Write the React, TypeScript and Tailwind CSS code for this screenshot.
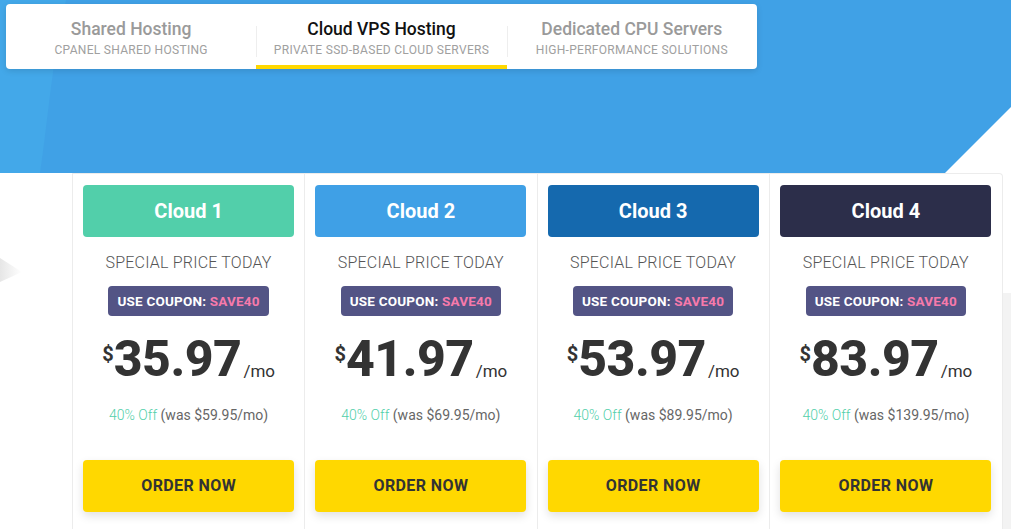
import React from 'react';

const tabs = [
  { title: 'Shared Hosting', sub: 'cPanel Shared Hosting', active: false },
  { title: 'Cloud VPS Hosting', sub: 'Private SSD-Based Cloud Servers', active: true },
  { title: 'Dedicated CPU Servers', sub: 'High-Performance Solutions', active: false },
];

const plans = [
  { name: 'Cloud 1', color: 'bg-[#52cfaa]', price: '35.97', was: '$59.95' },
  { name: 'Cloud 2', color: 'bg-[#3fa0e6]', price: '41.97', was: '$69.95' },
  { name: 'Cloud 3', color: 'bg-[#1569ae]', price: '53.97', was: '$89.95' },
  { name: 'Cloud 4', color: 'bg-[#2c2e4a]', price: '83.97', was: '$139.95' },
];

export default function App() {
  return (
    <div className="relative w-[1011px] h-[529px] overflow-hidden bg-white font-['Roboto',sans-serif]">
      {/* backdrop decorations */}
      <div className="absolute right-0 top-[293px] bottom-0 w-[8px] bg-[#f3f3f3]" />
      <svg className="absolute left-0 top-[240px]" width="30" height="50" viewBox="0 0 30 50">
        <defs>
          <linearGradient id="shade" x1="0" y1="0" x2="1" y2="0">
            <stop offset="0" stopColor="#e6e6e6" />
            <stop offset="1" stopColor="#ffffff" />
          </linearGradient>
        </defs>
        <polygon points="0,18 22,32 0,42" fill="url(#shade)" />
      </svg>

      <section className="relative h-[173px] bg-[#40a1e6]">
        <svg className="absolute inset-0" width="1011" height="173" viewBox="0 0 1011 173">
          <path d="M0,0 L66,0 C52,60 48,120 40,173 L0,173 Z" fill="#43a8e9" />
          <polygon points="1011,107 1011,173 945,173" fill="#ffffff" />
        </svg>

        <div className="relative left-[6px] top-[4px] flex w-[751px] h-[65px] rounded bg-white shadow-[0_2px_6px_rgba(0,0,0,0.12)]">
          {tabs.map((t, i) => (
            <div key={i} className="relative flex flex-1 flex-col items-center pt-[15px]">
              {i > 0 && <div className="absolute left-0 top-[22px] h-[31px] w-px bg-[#eeeeee]" />}
              <div className={`text-[17.5px] leading-[21px] font-medium ${t.active ? 'text-[#111]' : 'text-[#9a9a9a]'}`}>
                {t.title}
              </div>
              <div className="mt-[2px] text-[12px] leading-[16px] tracking-[0.3px] uppercase text-[#a0a0a0]">{t.sub}</div>
              {t.active && <div className="absolute left-0 right-0 bottom-0 h-[4px] bg-[#ffd800]" />}
            </div>
          ))}
        </div>
      </section>

      <div className="relative ml-[72px] flex w-[931px] h-[356px] rounded-tr border-t border-l border-r border-[#ececec] bg-white">
        {plans.map((p, i) => (
          <div key={i} className={`flex w-[233px] flex-col items-center px-[10px] pt-[11px] ${i < 3 ? 'border-r border-[#ececec]' : ''}`}>
            <div className={`flex h-[52px] w-[211px] items-center justify-center rounded ${p.color} text-[20px] font-bold text-white`}>
              {p.name}
            </div>
            <div className="mt-[14px] text-[16px] leading-[24px] tracking-[0.2px] font-light text-[#555]">SPECIAL PRICE TODAY</div>
            <div className="mt-[11px] flex h-[30px] items-center rounded-sm bg-[#535485] px-[9px] text-[13.5px] font-bold tracking-[0.2px] text-white">
              USE COUPON:&nbsp;<span className="text-[#f77aab]">SAVE40</span>
            </div>
            <div className="mt-[12px] flex h-[56px] items-end text-[#333]">
              <span className="self-start mt-[16px] text-[20px] font-bold leading-none">$</span>
              <span className="text-[50px] font-extrabold leading-[50px] tracking-[-0.5px]">{p.price}</span>
              <span className="ml-[2px] mb-[4px] text-[17px] leading-none">/mo</span>
            </div>
            <div className="mt-[21px] text-[14px] leading-[20px] text-[#666]">
              <span className="font-light text-[#52cfaa]">40% Off</span> (was {p.was}/mo)
            </div>
            <button className="mt-[35px] h-[52px] w-[211px] rounded bg-[#ffd800] text-[16px] font-bold tracking-[0.4px] text-[#333] shadow-[0_4px_10px_rgba(0,0,0,0.12)]">
              ORDER NOW
            </button>
          </div>
        ))}
      </div>
    </div>
  );
}
